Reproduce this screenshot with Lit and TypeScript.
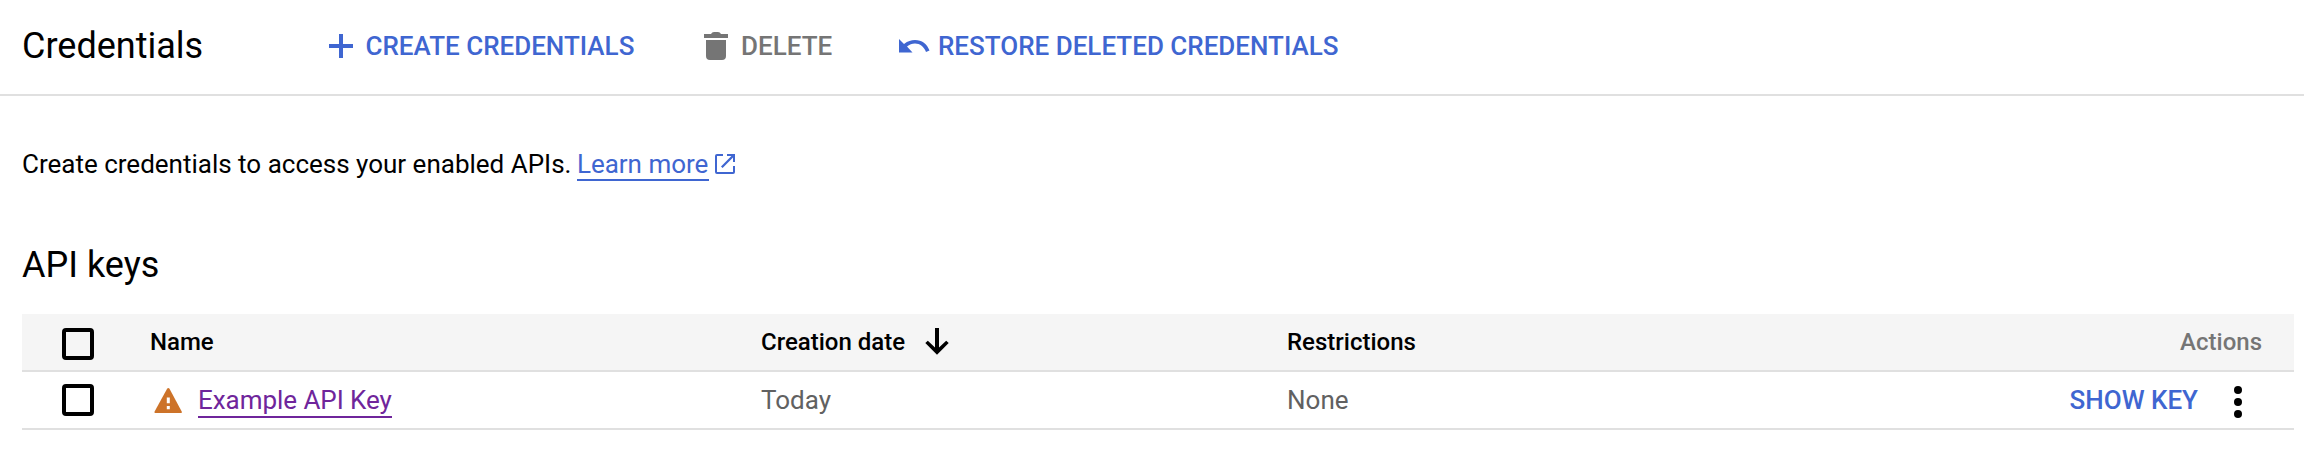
import { LitElement, html, css, svg } from "lit";
import { customElement } from "lit/decorators.js";

const icon = (cls: string, w: number, h: number, body: unknown) => html`
  <svg class=${cls} width=${w} height=${h} viewBox="0 0 ${w} ${h}" aria-hidden="true">${body}</svg>
`;

const plus = icon("plus", 24, 24, svg`<path fill="currentColor" d="M10 0h4v10h10v4H14v10h-4V14H0v-4h10z"/>`);
const trash = icon("trash", 24, 28, svg`<path fill="currentColor" d="M0 2h7q1-2 3-2h4q2 0 3 2h7v4H0zM2 8h20v16q0 4-4 4H6q-4 0-4-4z"/>`);
const undo = icon("undo", 31, 14, svg`<path fill="currentColor" d="M0 0l5 5C9 2 12 1 16 1c7 0 12 4 14.5 10.5L27 13C25 8 21 4.600 16 4.600c-3 0-5.500 1-8 3L13.500 13.500H0z"/>`);
const external = icon("external", 20, 20, svg`
  <path fill="currentColor" d="M2 0h6v2H2v16h16v-6h2v6q0 2-2 2H2q-2 0-2-2V2q0-2 2-2zM12 0h8v8h-2V3.600L7.600 14 6 12.400 16.400 2H12z"/>`);
const arrow = icon("arrow", 24, 27, svg`<path fill="currentColor" d="M10 0h4v19.500l7.200-6.700L23.700 15 12 26.700.3 15l2.500-2.200 7.200 6.700z"/>`);
const warning = icon("warning", 28, 25, svg`
  <path fill="#cd7329" d="M13.100.8q1.200-1.600 2.400 0l12.200 22.700q.5 1.500-1 1.500H1.600q-1.500 0-1-1.500z"/>
  <path fill="#fff" d="M12.800 9.500h3v5.700h-3zM12.800 18h3v3.200h-3z"/>`);
const more = icon("more", 8, 32, svg`
  <circle cx="4" cy="4" r="4"/><circle cx="4" cy="16" r="4"/><circle cx="4" cy="28" r="4"/>`);

@customElement("app-root")
export class AppRoot extends LitElement {
  static styles = css`
    :host { display: block; height: 464px; background: #fff; color: #000; font-family: Roboto, sans-serif; font-size: 26px; overflow: hidden; }
    * { box-sizing: border-box; }
    svg { display: block; flex: none; }
    h1, h2, p { margin: 0; font-weight: 400; }
    button { display: flex; align-items: center; padding: 0; border: 0; background: none; color: #3f66d1; font: 500 26px/32px Roboto, sans-serif; white-space: nowrap; }
    .toolbar { display: flex; align-items: center; height: 96px; padding: 0 22px 2px; border-bottom: 2px solid #e0e0e0; }
    .title { width: 307px; font-size: 36px; line-height: 40px; }
    .create { width: 375px; gap: 12.500px; }
    .delete { width: 195px; gap: 13px; color: #757575; }
    .restore { gap: 8px; }
    .content { padding: 52px 10px 0 22px; }
    .intro { display: flex; line-height: 33px; white-space: pre; }
    .link { text-decoration: none; border-bottom: 2px solid; }
    .learn { height: 33px; margin-left: -1px; padding-right: 1px; color: #3f66d1; }
    .external { margin: 6px 0 0 6px; color: #3f66d1; }
    .section { margin-top: 64px; font-size: 36px; line-height: 40px; }
    .table { margin-top: 29px; }
    .row { display: grid; grid-template-columns: 128px 611px 526px 1fr auto; align-items: center; height: 58px; border-bottom: 2px solid #e0e0e0; color: #616161; }
    .head { background: #f5f5f5; color: #000; font-size: 24px; font-weight: 500; }
    .box { width: 32px; height: 32px; margin-left: 40px; border: 4px solid #000; border-radius: 4px; }
    .head .box { margin-top: 4px; }
    .date { display: flex; align-items: center; gap: 20px; }
    .arrow { margin-top: -2px; }
    .name { display: flex; align-items: center; padding-left: 4px; gap: 16px; }
    .key { height: 33px; margin-top: 2px; line-height: 30px; letter-spacing: -0.05px; color: #6f259b; }
    .actions { padding-right: 32px; color: #757575; }
    .menu { display: flex; align-items: center; gap: 36px; padding-right: 52px; }
    .more { margin-top: 4px; fill: #000; }
  `;

  render() {
    return html`
      <header class="toolbar">
        <h1 class="title">Credentials</h1>
        <button class="create">${plus}<span>CREATE CREDENTIALS</span></button>
        <button class="delete">${trash}<span>DELETE</span></button>
        <button class="restore">${undo}<span>RESTORE DELETED CREDENTIALS</span></button>
      </header>
      <main class="content">
        <p class="intro"><span>Create credentials to access your enabled APIs. </span><a class="link learn">Learn more</a>${external}</p>
        <h2 class="section">API keys</h2>
        <div class="table">
          <div class="row head">
            <div class="box"></div>
            <div>Name</div>
            <div class="date"><span>Creation date</span>${arrow}</div>
            <div>Restrictions</div>
            <div class="actions">Actions</div>
          </div>
          <div class="row">
            <div class="box"></div>
            <div class="name">${warning}<a class="link key">Example API Key</a></div>
            <div>Today</div>
            <div>None</div>
            <div class="menu"><button>SHOW KEY</button>${more}</div>
          </div>
        </div>
      </main>
    `;
  }
}
